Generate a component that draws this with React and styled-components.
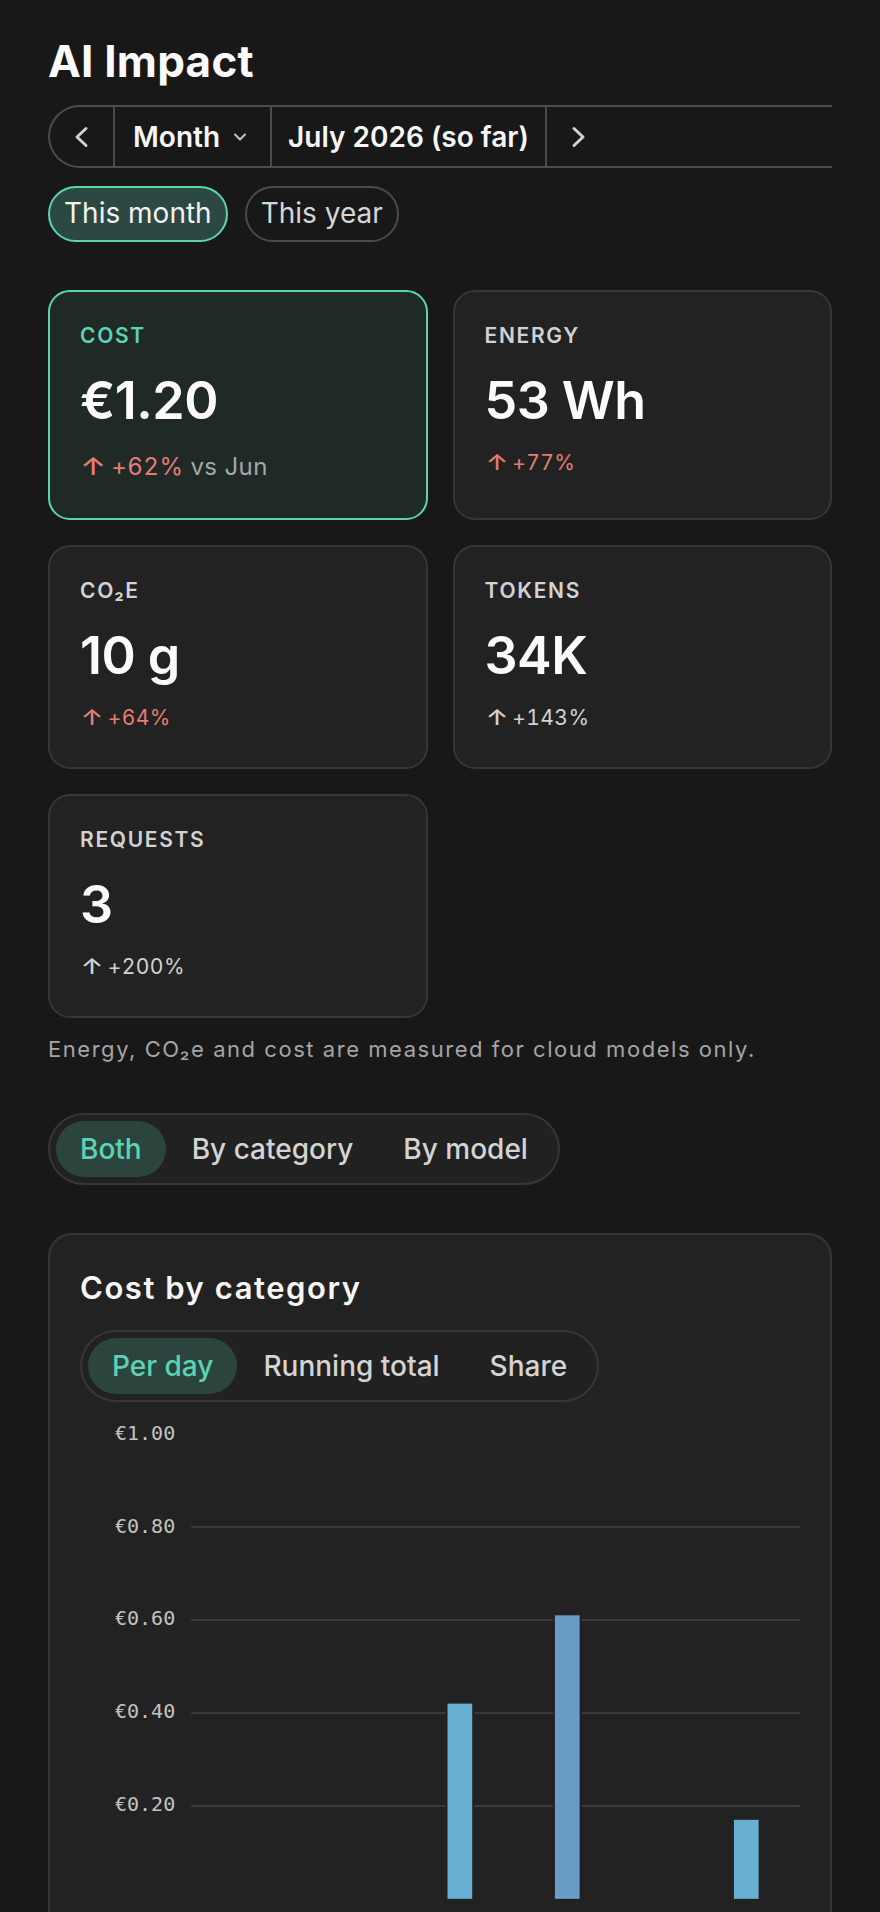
import React from 'react'
import styled, { createGlobalStyle } from 'styled-components'

const GlobalStyle = createGlobalStyle`
  html, body {
    margin: 0;
    background: #181818;
  }
  body {
    font-family: Inter, "Noto Sans", sans-serif;
    color: #f4f4f4;
    -webkit-font-smoothing: antialiased;
  }
  * {
    box-sizing: border-box;
  }
`

const teal = '#5cd3b2'
const red = '#e57d74'

const stats = [
  { key: 'cost', label: 'COST', value: '€1.20', delta: '+62%', note: 'vs Jun', tone: 'up', primary: true },
  { key: 'energy', label: 'ENERGY', value: '53 Wh', delta: '+77%', tone: 'up' },
  { key: 'co2', label: 'CO₂E', value: '10 g', delta: '+64%', tone: 'up' },
  { key: 'tokens', label: 'TOKENS', value: '34K', delta: '+143%', tone: 'neutral' },
  { key: 'requests', label: 'REQUESTS', value: '3', delta: '+200%', tone: 'neutral' },
]

// cost per day for July so far, with the category of that day
const daily = [
  0, 0, 0, 0, 0, 0, 0,
  { v: 0.42, cat: 'chat' },
  0, 0,
  { v: 0.61, cat: 'code' },
  0, 0, 0, 0,
  { v: 0.17, cat: 'chat' },
  0,
]

const catColors = { chat: '#67afd0', code: '#6a9cc8' }

const Page = styled.main`
  display: flex;
  flex-direction: column;
  gap: 48px;
  padding: 35px 48px 40px;
`

const Header = styled.header`
  display: flex;
  flex-direction: column;
  gap: 18px;
`

const Title = styled.h1`
  margin: 0;
  font-size: 44px;
  line-height: 52px;
  font-weight: 700;
  letter-spacing: 0.005em;
  color: #fafafa;
`

const NavClip = styled.div`
  overflow: hidden;
`

const NavBar = styled.nav`
  display: flex;
  width: calc(100% + 60px);
  height: 63px;
  border: 2px solid #4b4b4b;
  border-right: none;
  border-radius: 32px 0 0 32px;
`

const NavCell = styled.button`
  display: flex;
  align-items: center;
  justify-content: center;
  gap: 12px;
  height: 100%;
  padding: ${p => p.$pad || '0'};
  width: ${p => p.$w || 'auto'};
  flex: ${p => (p.$grow ? 1 : 'none')};
  background: transparent;
  border: none;
  border-left: ${p => (p.$bare ? 'none' : '2px solid #4b4b4b')};
  font-family: inherit;
  font-size: 28px;
  font-weight: 600;
  color: #f6f6f6;
  cursor: pointer;
`

const Pills = styled.div`
  display: flex;
  gap: 17px;
`

const Pill = styled.button`
  padding: 9px 14px;
  border-radius: 999px;
  border: 2px solid ${p => (p.$active ? teal : '#4a4a4a')};
  background: ${p => (p.$active ? '#2b4942' : 'transparent')};
  font-family: inherit;
  font-size: 28px;
  line-height: 1.2;
  font-weight: 400;
  color: ${p => (p.$active ? '#f2f2f2' : '#d6d6d6')};
  cursor: pointer;
`

const StatsBlock = styled.section`
  display: flex;
  flex-direction: column;
  gap: 16px;
`

const StatGrid = styled.div`
  display: grid;
  grid-template-columns: 1fr 1fr;
  gap: 25px;
`

const StatCard = styled.div`
  display: flex;
  flex-direction: column;
  padding: 30px 30px 35px;
  border-radius: 22px;
  border: 2px solid ${p => (p.$primary ? teal : '#363636')};
  background: ${p => (p.$primary ? '#1f2926' : '#222222')};
`

const StatLabel = styled.div`
  font-size: 21px;
  line-height: 28px;
  font-weight: 600;
  letter-spacing: 0.08em;
  color: ${p => (p.$primary ? teal : '#d2d2d2')};
`

const StatValue = styled.div`
  margin-top: 20px;
  font-size: 52px;
  line-height: 62px;
  font-weight: 600;
  letter-spacing: -0.01em;
  color: #fbfbfb;
`

const StatDelta = styled.div`
  margin-top: ${p => (p.$primary ? '18px' : '16px')};
  font-size: ${p => (p.$primary ? '24px' : '21px')};
  line-height: ${p => (p.$primary ? '33px' : '29px')};
  font-variant-numeric: tabular-nums;
  letter-spacing: 0.02em;
  color: ${p => (p.$tone === 'up' ? red : '#d2d2d2')};
`

const Arrow = styled.span`
  display: inline-block;
  margin: 0 0.3em 0 3px;
  font-weight: 500;
  transform: scaleX(1.25);
`

const Note = styled.span`
  color: #a6a6a6;
`

const Footnote = styled.p`
  margin: 0;
  font-size: 22px;
  line-height: 31px;
  letter-spacing: 0.07em;
  color: #a5a5a5;
`

const Segmented = styled.div`
  display: inline-flex;
  align-self: flex-start;
  gap: 2px;
  padding: 6px;
  border-radius: 999px;
  border: 2px solid #363636;
  background: #212121;
`

const SegButton = styled.button`
  height: 56px;
  padding: 0 24px;
  border: none;
  border-radius: 999px;
  background: ${p => (p.$active ? '#2b453e' : 'transparent')};
  font-family: inherit;
  font-size: 28px;
  font-weight: 500;
  color: ${p => (p.$active ? teal : '#d4d4d4')};
  cursor: pointer;
`

const ChartCard = styled.section`
  display: flex;
  flex-direction: column;
  padding: 30px;
  border-radius: 24px;
  border: 2px solid #363636;
  background: #222222;
`

const ChartTitle = styled.h2`
  margin: 0 0 19px;
  font-size: 31px;
  line-height: 46px;
  font-weight: 600;
  letter-spacing: 0.05em;
  color: #f6f6f6;
`

const ChartSvg = styled.svg`
  display: block;
  margin-top: 12px;
  width: 100%;
  height: auto;
`

const ChevronLeft = () => (
  <svg width="20" height="24" viewBox="0 0 20 24" fill="none">
    <polyline points="14,3.5 5,12 14,20.5" stroke="#d0d0d0" strokeWidth="3" strokeLinecap="round" strokeLinejoin="round" />
  </svg>
)

const ChevronRight = () => (
  <svg width="20" height="24" viewBox="0 0 20 24" fill="none">
    <polyline points="6,3.5 15,12 6,20.5" stroke="#d0d0d0" strokeWidth="3" strokeLinecap="round" strokeLinejoin="round" />
  </svg>
)

const ChevronDown = () => (
  <svg width="16" height="10" viewBox="0 0 16 10" fill="none">
    <polyline points="3,2.5 8,7.5 13,2.5" stroke="#c4c4c4" strokeWidth="2" strokeLinecap="round" strokeLinejoin="round" />
  </svg>
)

const CostChart = () => {
  const W = 718
  const H = 540
  const left = 111
  const top = 20
  const plotH = 463.5
  const zero = top + plotH
  const slot = (W - left) / daily.length
  const barW = slot * 0.69
  const ticks = [1, 0.8, 0.6, 0.4, 0.2]
  const y = v => zero - v * plotH

  return (
    <ChartSvg viewBox={`0 0 ${W} ${H}`}>
      {ticks.map(t => (
        <g key={t}>
          {t < 1 && <line x1={left} x2={W} y1={y(t)} y2={y(t)} stroke="#3a3a3a" strokeWidth="2" />}
          <text
            x={95}
            y={y(t)}
            textAnchor="end"
            dominantBaseline="middle"
            fontFamily="'DejaVu Sans Mono', monospace"
            fontSize="20"
            fill="#c2c2c2"
          >
            €{t.toFixed(2)}
          </text>
        </g>
      ))}
      {daily.map((d, i) =>
        d ? (
          <rect
            key={i}
            x={left + i * slot + (slot - barW) / 2}
            y={y(d.v)}
            width={barW}
            height={d.v * plotH}
            fill={catColors[d.cat]}
            stroke="#222222"
            strokeWidth="4"
            paintOrder="stroke"
          />
        ) : null
      )}
      {[0, 7, 14].map(i => (
        <text
          key={i}
          x={left + i * slot + slot / 2}
          y={zero + 34}
          textAnchor="middle"
          fontFamily="'DejaVu Sans Mono', monospace"
          fontSize="20"
          fill="#c2c2c2"
        >
          Jul {i + 1}
        </text>
      ))}
    </ChartSvg>
  )
}

const App = () => {
  return (
    <>
      <GlobalStyle />
      <Page>
        <Header>
          <Title>AI Impact</Title>
          <NavClip>
            <NavBar>
              <NavCell $bare $w="63px"><ChevronLeft /></NavCell>
              <NavCell $pad="0 22px 0 18px">Month <ChevronDown /></NavCell>
              <NavCell $pad="0 16px">July 2026 (so far)</NavCell>
              <NavCell $w="65px"><ChevronRight /></NavCell>
              <NavCell $bare $grow as="div" />
            </NavBar>
          </NavClip>
          <Pills>
            <Pill $active>This month</Pill>
            <Pill>This year</Pill>
          </Pills>
        </Header>

        <StatsBlock>
          <StatGrid>
            {stats.map(s => (
              <StatCard key={s.key} $primary={s.primary}>
                <StatLabel $primary={s.primary}>{s.label}</StatLabel>
                <StatValue>{s.value}</StatValue>
                <StatDelta $primary={s.primary} $tone={s.tone}>
                  <Arrow>↑</Arrow>{s.delta}{s.note && <Note> {s.note}</Note>}
                </StatDelta>
              </StatCard>
            ))}
          </StatGrid>
          <Footnote>Energy, CO₂e and cost are measured for cloud models only.</Footnote>
        </StatsBlock>

        <Segmented>
          <SegButton $active>Both</SegButton>
          <SegButton>By category</SegButton>
          <SegButton>By model</SegButton>
        </Segmented>

        <ChartCard>
          <ChartTitle>Cost by category</ChartTitle>
          <Segmented>
            <SegButton $active>Per day</SegButton>
            <SegButton>Running total</SegButton>
            <SegButton>Share</SegButton>
          </Segmented>
          <CostChart />
        </ChartCard>
      </Page>
    </>
  )
}

export default App
